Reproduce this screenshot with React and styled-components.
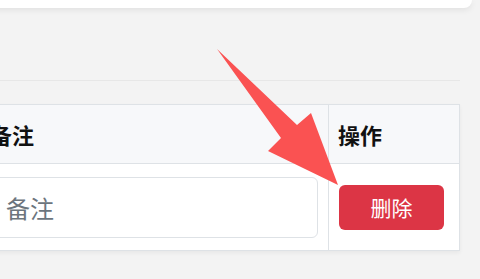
import React from 'react';
import styled, { createGlobalStyle } from 'styled-components';

const GlobalStyle = createGlobalStyle`
  html, body {
    margin: 0;
    padding: 0;
    background: #f3f3f3;
    font-family: "Noto Sans CJK SC", "Noto Sans", sans-serif;
    overflow: hidden;
  }
`;

const Page = styled.div`
  position: relative;
  width: 480px;
  height: 279px;
  padding-right: 20px;
  box-sizing: border-box;
`;

const TopCard = styled.div`
  height: 8px;
  margin-left: -40px;
  margin-right: -12px;
  background: #fff;
  border-radius: 0 0 12px 12px;
  box-shadow: 0 2px 6px rgba(0, 0, 0, 0.08);
`;

const Divider = styled.div`
  margin-top: 72px;
  height: 1px;
  background: #e7e7e7;
`;

const Table = styled.div`
  margin-top: 23px;
  margin-left: -20px;
  display: grid;
  grid-template-columns: 347px 1fr;
  border: 1px solid #dee2e6;
  background: #fff;
  box-shadow: 0 2px 4px rgba(0, 0, 0, 0.05);
`;

const HeadCell = styled.div`
  height: 58px;
  display: flex;
  align-items: center;
  padding: 0 9px;
  background: #f7f8fa;
  border-bottom: 1px solid #dee2e6;
  border-left: ${p => (p.$divider ? '1px solid #dee2e6' : 'none')};
  font-size: 22px;
  font-weight: 700;
  color: #111;
`;

const BodyCell = styled.div`
  height: 86px;
  display: flex;
  align-items: center;
  padding: 0 10px;
  border-left: ${p => (p.$divider ? '1px solid #dee2e6' : 'none')};
`;

const NoteInput = styled.input`
  width: 100%;
  height: 61px;
  box-sizing: border-box;
  padding: 0 14px;
  border: 1px solid #dee2e6;
  border-radius: 6px;
  font-family: inherit;
  font-size: 24px;
  color: #212529;
  background: #fff;
  outline: none;

  &::placeholder {
    color: #6c757d;
  }
`;

const DeleteButton = styled.button`
  width: 105px;
  height: 45px;
  border: none;
  border-radius: 6px;
  background: #dc3545;
  color: #fff;
  font-family: inherit;
  font-size: 21px;
  cursor: pointer;
`;

const ArrowLayer = styled.svg`
  position: absolute;
  left: 0;
  top: 0;
  pointer-events: none;
`;

export default function App() {
  return (
    <Page>
      <GlobalStyle />
      <TopCard />
      <Divider />
      <Table>
        <HeadCell>备注</HeadCell>
        <HeadCell $divider>操作</HeadCell>
        <BodyCell>
          <NoteInput placeholder="备注" />
        </BodyCell>
        <BodyCell $divider>
          <DeleteButton>删除</DeleteButton>
        </BodyCell>
      </Table>
      <ArrowLayer width="480" height="279" viewBox="0 0 480 279">
        <polygon
          points="217,49 297,125 311,113 338,185 268,151 281,138"
          fill="#fa5252"
        />
      </ArrowLayer>
    </Page>
  );
}
